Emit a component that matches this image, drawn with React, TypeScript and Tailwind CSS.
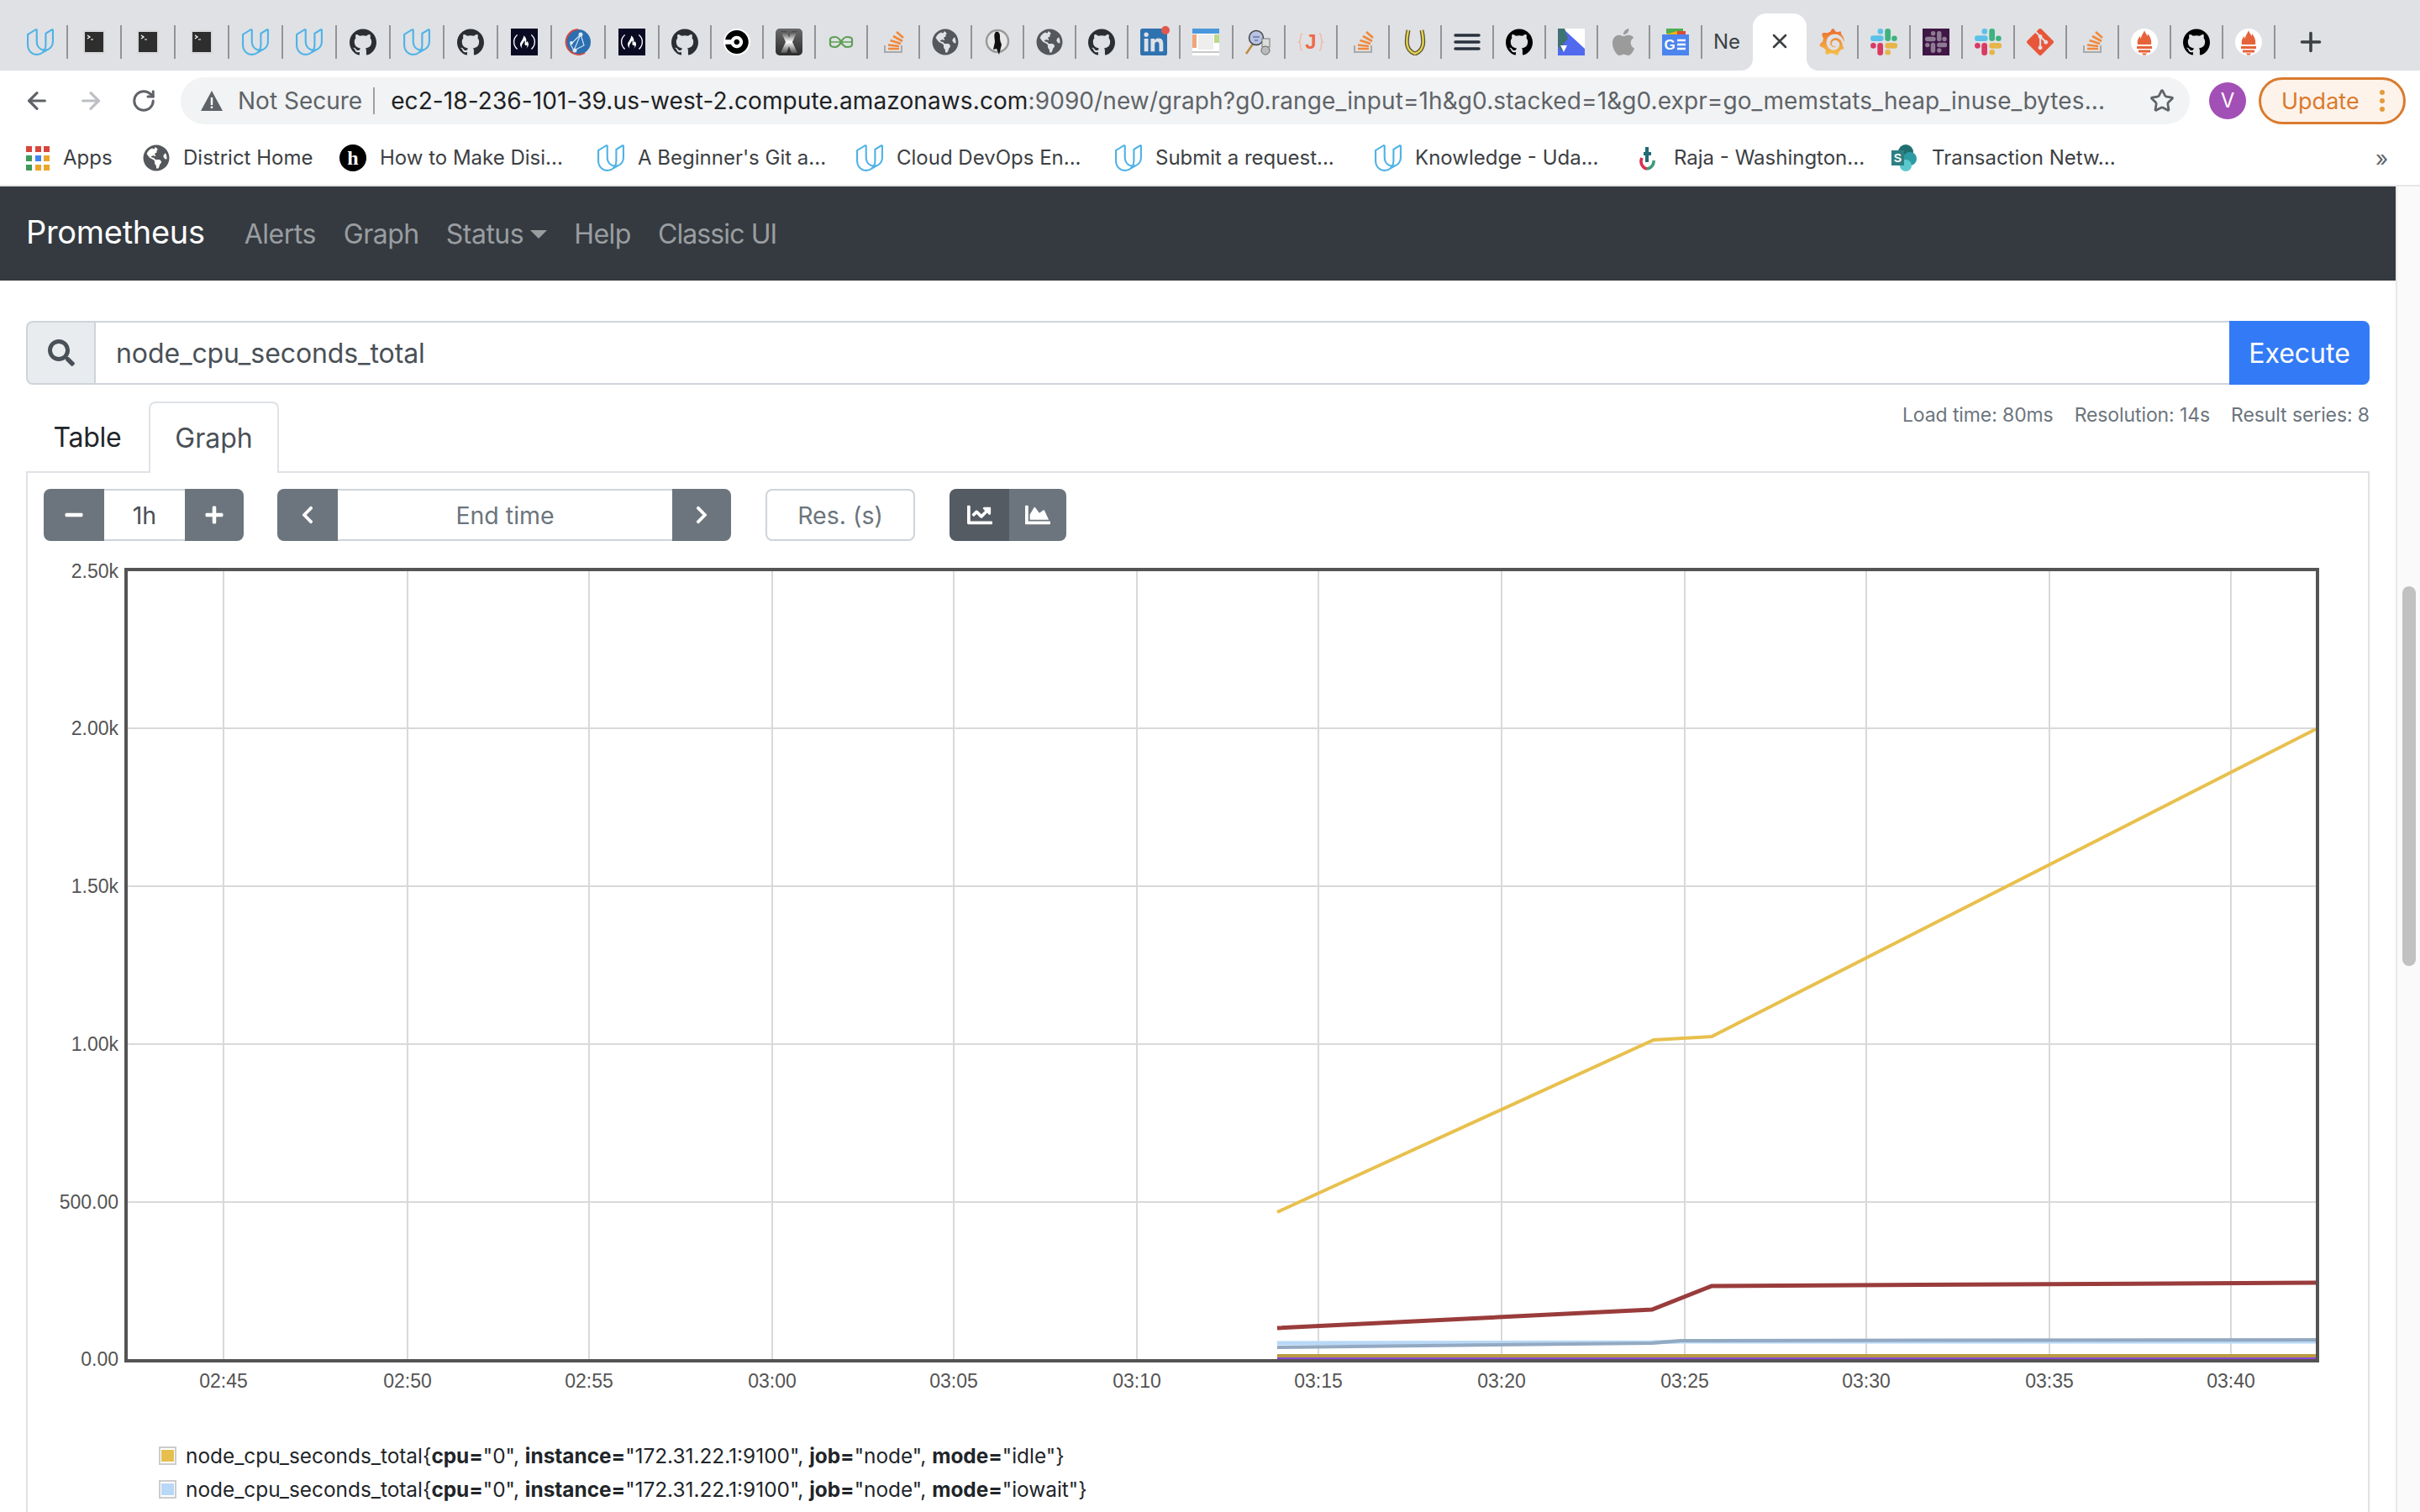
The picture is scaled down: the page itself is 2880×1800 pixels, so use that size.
import type { ReactNode } from "react";
import { ArrowLeft, ArrowRight, Plus, RotateCw, Star, X } from "lucide-react";
import { FaChartArea, FaChartLine, FaChevronLeft, FaChevronRight, FaGlobeAmericas, FaMinus, FaPlus, FaSearch } from "react-icons/fa";
import { SiApple, SiCircleci, SiFreecodecamp, SiGit, SiGithub, SiGrafana, SiLinkedin, SiUdacity } from "react-icons/si";

const Box = ({ children }: { children: ReactNode }) => (
  <svg viewBox="0 0 32 32" className="h-[32px] w-[32px] shrink-0">
    {children}
  </svg>
);

const Udacity = () => <SiUdacity className="h-[32px] w-[32px] shrink-0 text-[#4fb3e6]" />;
const Github = ({ dark }: { dark?: boolean }) => (
  <SiGithub className={`h-[32px] w-[32px] shrink-0 ${dark ? "text-black" : "text-[#2b2f33]"}`} />
);
const Globe = () => <FaGlobeAmericas className="h-[32px] w-[32px] shrink-0 text-[#54575b]" />;

const Terminal = () => (
  <Box>
    <rect x="3" y="2" width="26" height="28" fill="#d8d8d8" />
    <rect x="5" y="4" width="22" height="24" fill="#2e2e2e" />
    <path d="M8 8l3 2-3 2M12 13h3" stroke="#fff" strokeWidth="1.2" fill="none" />
  </Box>
);

const FreeCodeCamp = () => (
  <span className="flex h-[32px] w-[32px] shrink-0 items-center justify-center bg-[#0a0a23]">
    <SiFreecodecamp className="h-[26px] w-[26px] text-white" />
  </span>
);

const StackOverflow = () => (
  <Box>
    <path d="M6 20v8h20v-8" stroke="#a9a9a9" strokeWidth="2" fill="none" />
    <path d="M10 24h13M10 19.500l13 1.500M12.500 14l12.500 4M16 9l11 6M20 4l8 7" stroke="#f0883a" strokeWidth="2.600" fill="none" />
  </Box>
);

const Prometheus = () => (
  <Box>
    <circle cx="16" cy="16" r="16" fill="#fff" />
    <path d="M16 2c1 4 3 4 3 7 1-1 1-2 1-3 3 4 5 8 4 13H8c-1-5 1-8 3-10 0 1 0 2 1 3 0-4 3-6 4-10z" fill="#e6633a" />
    <path d="M7 21h18v3H7zM9 25.500h14v3H9zM13 29.500h6l-1.500 2h-3z" fill="#e6633a" />
  </Box>
);

const SlackShapes = ({ blue, green, red, yellow }: { blue: string; green: string; red: string; yellow: string }) => (
  <>
    <rect x="0" y="8.300" width="15.600" height="6.700" rx="3.300" fill={blue} />
    <circle cx="11.800" cy="3.400" r="3.300" fill={blue} />
    <rect x="17.300" y="0" width="6.700" height="15" rx="3.300" fill={green} />
    <circle cx="28.400" cy="11.700" r="3.300" fill={green} />
    <circle cx="3.400" cy="20.400" r="3.300" fill={red} />
    <rect x="8.300" y="17" width="6.700" height="15" rx="3.300" fill={red} />
    <rect x="17.300" y="17" width="15" height="6.700" rx="3.300" fill={yellow} />
    <circle cx="20.700" cy="28.300" r="3.300" fill={yellow} />
  </>
);

const Slack = () => (
  <Box>
    <SlackShapes blue="#5cc1e8" green="#3fb27f" red="#d93a62" yellow="#e6b64a" />
  </Box>
);

const tabsBefore: ReactNode[] = [
  <Udacity />,
  <Terminal />,
  <Terminal />,
  <Terminal />,
  <Udacity />,
  <Udacity />,
  <Github />,
  <Udacity />,
  <Github />,
  <FreeCodeCamp />,
  <Box>
    <circle cx="16" cy="16" r="15" fill="#2b6fb0" />
    <path d="M4 24A15 15 0 0 1 16 1M2 19a15 15 0 0 0 22 10" stroke="#cf4a42" strokeWidth="2" fill="none" />
    <path d="M7 19L19 7l4 13-12 6zM19 7l-8 19" stroke="#cfe2f3" strokeWidth="1.200" fill="none" />
    <circle cx="19" cy="7" r="2.500" fill="#dbe8f5" />
    <circle cx="12" cy="26" r="2.500" fill="#dbe8f5" />
    <circle cx="8" cy="17" r="2" fill="#dbe8f5" />
  </Box>,
  <FreeCodeCamp />,
];

const tabsMiddle: ReactNode[] = [
  <Github />,
  <span className="h-[32px] w-[32px] shrink-0 rounded-full bg-white">
    <SiCircleci className="m-[2px] h-[28px] w-[28px] text-black" />
  </span>,
  <Box>
    <defs>
      <linearGradient id="xbg" x1="0" y1="0" x2="0" y2="1">
        <stop offset="0" stopColor="#6a6a6a" />
        <stop offset="1" stopColor="#2c2c2c" />
      </linearGradient>
      <linearGradient id="xfg" x1="0" y1="0" x2="0" y2="1">
        <stop offset="0" stopColor="#444" />
        <stop offset="0.500" stopColor="#fff" />
        <stop offset="1" stopColor="#555" />
      </linearGradient>
    </defs>
    <rect x="0" y="0" width="32" height="32" rx="5" fill="url(#xbg)" />
    <path d="M6 3h7l3 8 3-8h7l-6 13 6 13h-7l-3-8-3 8H6l6-13z" fill="url(#xfg)" />
  </Box>,
  <Box>
    <path d="M3 13Q3 10 9 10q4 0 7 6t7 6q6 0 6-3v-6q0-3-6-3-4 0-7 6t-7 6q-6 0-6-3z" fill="none" stroke="#5e9f52" strokeWidth="2.200" />
    <path d="M3 16h26" stroke="#5e9f52" strokeWidth="1.500" />
  </Box>,
  <StackOverflow />,
  <Globe />,
  <Box>
    <circle cx="16" cy="15" r="13" fill="#e8e8e8" stroke="#9a9a9a" strokeWidth="2.500" />
    <path d="M14 4c3-1 5 1 5 5 0 3 0 6 2 10l-3 12-3-7-4 1 2-9c0-4-2-9 1-12z" fill="#111" />
  </Box>,
  <Globe />,
  <Github />,
  <span className="relative h-[32px] w-[32px] shrink-0">
    <SiLinkedin className="h-[32px] w-[32px] text-[#2f72b0]" />
    <span className="absolute -right-[3px] -top-[3px] h-[10px] w-[10px] rounded-full bg-[#e2574c]" />
  </span>,
  <Box>
    <rect width="32" height="32" fill="#fff" />
    <rect width="32" height="6" fill="#4a98db" />
    <rect x="7" y="7" width="18" height="18" fill="#eeeeee" />
    <rect y="7" width="5" height="16" fill="#efa678" />
    <rect x="26" y="7" width="6" height="10" fill="#bcd88c" />
    <rect y="27" width="32" height="2" fill="#c8c8c8" />
  </Box>,
  <Box>
    <path d="M1 30l9-13" stroke="#b98b3c" strokeWidth="2.500" />
    <circle cx="13" cy="11" r="8.500" fill="#b7c4e2" stroke="#444" strokeWidth="1.500" />
    <path d="M9 10h8M11 14h4" stroke="#6a74a8" strokeWidth="1.500" />
    <rect x="20" y="12" width="9" height="10" fill="#ddd" stroke="#777" />
    <circle cx="24" cy="26" r="5" fill="#bbb" stroke="#666" />
  </Box>,
  <Box>
    <text x="16" y="24" textAnchor="middle" fontSize="24" fontWeight="700" fill="#ee6a45" className="font-['Liberation_Sans',sans-serif]">
      J
    </text>
    <path d="M6 6C2 6 5 15 2 16c3 1 0 10 4 10M26 6c4 0 1 9 4 10-3 1 0 10-4 10" stroke="#f4b8a4" strokeWidth="1.500" fill="none" />
  </Box>,
  <StackOverflow />,
  <Box>
    <path d="M8 2c-3 14-3 24 8 28 11-4 11-14 8-28" fill="none" stroke="#55502a" strokeWidth="5" />
    <path d="M8 2c-3 14-3 24 8 28 11-4 11-14 8-28" fill="none" stroke="#e3cf54" strokeWidth="2.500" />
  </Box>,
  <Box>
    <path d="M2 8h28M2 16h28M2 24h28" stroke="#29313c" strokeWidth="3.500" strokeLinecap="round" />
  </Box>,
  <Github dark />,
  <Box>
    <rect width="32" height="32" fill="#5069ef" />
    <path d="M6 0h26v24z" fill="#fff" />
    <path d="M0 0h8l4 12-6 7-1 9-5-8z" fill="#3f7273" />
    <path d="M3 20h8l-4 8z" fill="#fff" />
  </Box>,
  <SiApple className="h-[32px] w-[32px] shrink-0 text-[#9b9b9b]" />,
  <Box>
    <path d="M5 0h20v6H5z" fill="#4caf50" />
    <path d="M4 7l14-4 10 4z" fill="#f4b400" />
    <path d="M18 3h10v4H18z" fill="#db4a3a" />
    <rect y="7" width="32" height="25" fill="#4c84ee" />
    <text x="9" y="25" textAnchor="middle" fontSize="17" fontWeight="700" fill="#fff" className="font-['Liberation_Sans',sans-serif]">
      G
    </text>
    <path d="M18 14h10M18 19h10M18 24h10" stroke="#fff" strokeWidth="2.500" />
  </Box>,
];

const tabsAfter: ReactNode[] = [
  <span className="h-[32px] w-[32px] shrink-0">
    <svg className="absolute h-0 w-0">
      <defs>
        <linearGradient id="grafana" x1="0" y1="0" x2="0" y2="1">
          <stop offset="0" stopColor="#ec6a2c" />
          <stop offset="1" stopColor="#f6c24a" />
        </linearGradient>
      </defs>
    </svg>
    <SiGrafana className="h-[32px] w-[32px]" fill="url(#grafana)" />
  </span>,
  <Slack />,
  <span className="h-[32px] w-[32px] shrink-0 bg-[#3f1645] p-[3px]">
    <svg viewBox="0 0 32 32" className="h-[26px] w-[26px]">
      <SlackShapes blue="#8f7a93" green="#8f7a93" red="#8f7a93" yellow="#8f7a93" />
    </svg>
  </span>,
  <Slack />,
  <SiGit className="h-[32px] w-[32px] shrink-0 text-[#e8563a]" />,
  <StackOverflow />,
  <Prometheus />,
  <Github dark />,
  <Prometheus />,
];

const bookmarks: { icon: ReactNode; label: string; w: string }[] = [
  {
    label: "Apps",
    w: "w-[139px]",
    icon: (
      <span className="grid h-[28px] w-[28px] shrink-0 grid-cols-3 gap-[4px]">
        {["#d9453a", "#d9453a", "#d9453a", "#3f9a5a", "#3f85ee", "#eba52b", "#3f9a5a", "#eba52b", "#eba52b"].map((c, i) => (
          <span key={i} className="h-[7px] w-[7px]" style={{ backgroundColor: c }} />
        ))}
      </span>
    ),
  },
  { label: "District Home", w: "w-[234px]", icon: <Globe /> },
  {
    label: "How to Make Disi...",
    w: "w-[307px]",
    icon: (
      <Box>
        <circle cx="16" cy="16" r="16" fill="#000" />
        <text x="16" y="24" textAnchor="middle" fontSize="24" fontWeight="700" fill="#fff" className="font-['Liberation_Serif',serif]">
          h
        </text>
      </Box>
    ),
  },
  { label: "A Beginner's Git a...", w: "w-[308px]", icon: <Udacity /> },
  { label: "Cloud DevOps En...", w: "w-[308px]", icon: <Udacity /> },
  { label: "Submit a request...", w: "w-[309px]", icon: <Udacity /> },
  { label: "Knowledge - Uda...", w: "w-[308px]", icon: <Udacity /> },
  {
    label: "Raja - Washington...",
    w: "w-[307px]",
    icon: (
      <Box>
        <path d="M10 16a9 9 0 0 0 6 13" stroke="#d9304f" strokeWidth="3.500" fill="none" />
        <path d="M16 29a9 9 0 0 0 8-10" stroke="#3f9a7a" strokeWidth="3.500" fill="none" />
        <path d="M16 3v18M12 11h9" stroke="#236a74" strokeWidth="4" fill="none" />
      </Box>
    ),
  },
  {
    label: "Transaction Netw...",
    w: "w-[260px]",
    icon: (
      <Box>
        <circle cx="17" cy="9" r="9" fill="#1f6f70" />
        <circle cx="22" cy="17" r="8" fill="#2c9ca2" />
        <circle cx="17" cy="25" r="7" fill="#5cc8cd" />
        <rect y="7" width="15" height="18" fill="#2d7f82" />
        <text x="7.500" y="21" textAnchor="middle" fontSize="14" fontWeight="700" fill="#fff" className="font-['Liberation_Sans',sans-serif]">
          S
        </text>
      </Box>
    ),
  },
];

const vGrid = [266, 485, 701, 919, 1135, 1353, 1569, 1787, 2005, 2221, 2439, 2655];
const xLabels = ["02:45", "02:50", "02:55", "03:00", "03:05", "03:10", "03:15", "03:20", "03:25", "03:30", "03:35", "03:40"];
const hGrid = [
  { y: 867, label: "2.00k" },
  { y: 1055, label: "1.50k" },
  { y: 1243, label: "1.00k" },
  { y: 1431, label: "500.00" },
];

function Chart() {
  return (
    <svg viewBox="52 660 2720 1010" className="mt-[16px] block h-[1010px] w-[2720px] font-['Liberation_Sans',sans-serif]">
      {vGrid.map((x) => (
        <line key={x} x1={x} x2={x} y1={678} y2={1620} stroke="#d9d9d9" strokeWidth="2" />
      ))}
      {hGrid.map((g) => (
        <line key={g.y} x1={150} x2={2758} y1={g.y} y2={g.y} stroke="#d9d9d9" strokeWidth="2" />
      ))}
      <polyline points="1520,1443 1968,1238 2037,1234 2756,868" fill="none" stroke="#e8c04d" strokeWidth="4" />
      <polyline points="1520,1581 1966,1559 2037,1531 2756,1527" fill="none" stroke="#9a3c3c" strokeWidth="5" />
      <polyline points="1520,1599 1966,1598 2000,1597 2756,1597" fill="none" stroke="#b8d8f6" strokeWidth="5" />
      <polyline points="1520,1604 1966,1599 2000,1596 2756,1595" fill="none" stroke="#93a9c1" strokeWidth="4" />
      <line x1="1520" x2="2756" y1="1614" y2="1614" stroke="#b99a40" strokeWidth="4" />
      <line x1="1520" x2="2756" y1="1618" y2="1618" stroke="#8a46d8" strokeWidth="4" />
      <rect x="150" y="678" width="2608" height="942" fill="none" stroke="#545454" strokeWidth="4" />
      <g fill="#545454" fontSize="23">
        <text x="141" y="688" textAnchor="end">2.50k</text>
        {hGrid.map((g) => (
          <text key={g.label} x="141" y={g.y + 8} textAnchor="end">
            {g.label}
          </text>
        ))}
        <text x="141" y="1626" textAnchor="end">0.00</text>
        {xLabels.map((t, i) => (
          <text key={t} x={vGrid[i]} y="1652" textAnchor="middle">
            {t}
          </text>
        ))}
      </g>
    </svg>
  );
}

function LegendRow({ mode, color }: { mode: string; color: string }) {
  return (
    <div className="flex h-[40px] items-center text-[24.400px] text-[#212529]">
      <span className="mr-[11px] flex h-[22px] w-[21px] items-center justify-center border-2 border-[#cccccc] bg-white">
        <span className="h-[14px] w-[15px]" style={{ backgroundColor: color }} />
      </span>
      <span>
        node_cpu_seconds_total{"{"}<b>cpu=</b>"0", <b>instance=</b>"172.31.22.1:9100", <b>job=</b>"node", <b>mode=</b>"{mode}"{"}"}
      </span>
    </div>
  );
}

export default function App() {
  return (
    <div className="flex h-[1800px] w-[2880px] flex-col overflow-hidden bg-white font-[Inter,sans-serif]">
      {/* tab strip */}
      <div className="flex h-[84px] shrink-0 items-end bg-[#dfe1e5] pl-[17px]">
        {tabsBefore.map((icon, i) => (
          <div key={i} className="mb-[14px] flex h-[40px] w-[64px] items-center justify-center border-r-2 border-[#929497]">
            {icon}
          </div>
        ))}
        {tabsMiddle.map((icon, i) => (
          <div key={i} className="mb-[14px] flex h-[40px] w-[62.050px] items-center justify-center border-r-2 border-[#929497]">
            {icon}
          </div>
        ))}
        <div className="mb-[14px] flex h-[40px] w-[60px] items-center overflow-hidden pl-[13px] text-[24px] text-[#3c4043]">Ne</div>
        <div className="relative flex h-[68px] w-[64px] items-center justify-center rounded-t-[16px] bg-white">
          <span className="absolute -left-[14px] bottom-0 h-[14px] w-[14px] bg-white">
            <span className="block h-[14px] w-[14px] rounded-br-[14px] bg-[#dfe1e5]" />
          </span>
          <span className="absolute -right-[14px] bottom-0 h-[14px] w-[14px] bg-white">
            <span className="block h-[14px] w-[14px] rounded-bl-[14px] bg-[#dfe1e5]" />
          </span>
          <X className="mb-[2px] h-[28px] w-[28px] text-[#3c4043]" strokeWidth={2.2} />
        </div>
        {tabsAfter.map((icon, i) => (
          <div key={i} className="mb-[14px] flex h-[40px] w-[62px] items-center justify-center border-r-2 border-[#929497]">
            {icon}
          </div>
        ))}
        <Plus className="mb-[16px] ml-[24px] h-[36px] w-[36px] text-[#3c4043]" strokeWidth={2.4} />
      </div>

      {/* toolbar */}
      <div className="flex h-[72px] shrink-0 items-center pl-[28px] text-[#5f6368]">
        <ArrowLeft className="h-[32px] w-[32px]" strokeWidth={2.4} />
        <ArrowRight className="ml-[32px] h-[32px] w-[32px] text-[#bcbfc3]" strokeWidth={2.4} />
        <RotateCw className="ml-[32px] h-[30px] w-[30px]" strokeWidth={2.4} />
        <div className="ml-[29px] flex h-[56px] w-[2391px] items-center rounded-full bg-[#f1f3f4] pl-[24px] text-[28px]">
          <svg viewBox="0 0 26 24" className="h-[24px] w-[26px] shrink-0">
            <path d="M13 0l13 24H0z" fill="#5f6368" />
            <path d="M11.800 8h2.400v9h-2.400zM11.800 18.500h2.400v2.500h-2.400z" fill="#fff" />
          </svg>
          <span className="ml-[18px] text-[#5f6368]">Not Secure</span>
          <span className="ml-[13px] h-[32px] w-[2px] bg-[#9aa0a6]" />
          <span className="ml-[19px] whitespace-nowrap tracking-[0.1px] text-[#5f6368]">
            <span className="text-[#202124]">ec2-18-236-101-39.us-west-2.compute.amazonaws.com</span>
            :9090/new/graph?g0.range_input=1h&amp;g0.stacked=1&amp;g0.expr=go_memstats_heap_inuse_bytes...
          </span>
          <Star className="ml-auto mr-[18px] h-[30px] w-[30px] shrink-0" strokeWidth={2.2} />
        </div>
        <div className="ml-[23px] flex h-[44px] w-[44px] items-center justify-center rounded-full bg-[#a24fb6] text-[24px] text-white">V</div>
        <div className="ml-[15px] flex h-[56px] w-[175px] items-center rounded-full border-[3px] border-[#d97b2e] bg-[#fdf3ea] pl-[24px] text-[27px] text-[#d97b2e]">
          <span className="pt-[2px]">Update</span>
          <span className="ml-[24px] flex flex-col gap-[4px]">
            <span className="h-[6px] w-[6px] rounded-full bg-[#e69a3c]" />
            <span className="h-[6px] w-[6px] rounded-full bg-[#e69a3c]" />
            <span className="h-[6px] w-[6px] rounded-full bg-[#e69a3c]" />
          </span>
        </div>
      </div>

      {/* bookmarks */}
      <div className="flex h-[66px] shrink-0 items-center border-b-2 border-[#e6e6e6] pl-[31px] text-[24px] text-[#3c4043]">
        {bookmarks.map((b) => (
          <div key={b.label} className={`flex items-center gap-[16px] ${b.w}`}>
            {b.icon}
            <span className="whitespace-nowrap">{b.label}</span>
          </div>
        ))}
        <span className="ml-[316px] text-[26px] text-[#5f6368]">»</span>
      </div>

      <div className="flex min-h-0 flex-1">
        <div className="min-w-0 flex-1">
          {/* prometheus navbar */}
          <nav className="flex h-[112px] items-center bg-[#343a40] pl-[31px] text-[32px] tracking-[-0.5px] text-[#9a9da0]">
            <span className="mb-[4px] mr-[47px] text-[38px] tracking-[-0.3px] text-white">Prometheus</span>
            <span className="pt-[2px]">Alerts</span>
            <span className="ml-[33px] pt-[2px]">Graph</span>
            <span className="ml-[32px] flex items-center pt-[2px]">
              Status
              <span className="ml-[8px] h-0 w-0 border-x-[10px] border-t-[10px] border-x-transparent border-t-[#9a9da0]" />
            </span>
            <span className="ml-[32px] pt-[2px]">Help</span>
            <span className="ml-[32px] pt-[2px] tracking-[-0.9px]">Classic UI</span>
          </nav>

          <div className="pl-[31px] pr-[31px] pt-[48px]">
            {/* expression input */}
            <div className="flex h-[76px] text-[32px]">
              <div className="flex w-[83px] items-center justify-center rounded-l-[8px] border-2 border-[#ced4da] bg-[#e9ecef] text-[#495057]">
                <FaSearch className="h-[32px] w-[32px]" />
              </div>
              <div className="flex flex-1 items-center border-y-2 border-[#ced4da] pl-[24px] pt-[2px] tracking-[-0.1px] text-[#495057]">node_cpu_seconds_total</div>
              <div className="flex w-[167px] items-center justify-center rounded-r-[8px] bg-[#337bf6] pt-[2px] text-white">Execute</div>
            </div>

            {/* tabs and query stats */}
            <div className="mt-[20px] flex h-[85px] items-start justify-between">
              <div className="flex text-[32px]">
                <div className="flex h-[85px] w-[146px] items-center justify-center tracking-[-0.3px] text-[#212529]">Table</div>
                <div className="relative z-10 flex h-[85px] w-[155px] items-center justify-center rounded-t-[8px] border-x-2 border-t-2 border-[#dee2e6] bg-white text-[#495057]">
                  Graph
                </div>
              </div>
              <div className="mt-[2px] flex gap-[25px] text-[23px] leading-[28px] tracking-[-0.1px] text-[#6c757d]">
                <span>Load time: 80ms</span>
                <span>Resolution: 14s</span>
                <span>Result series: 8</span>
              </div>
            </div>

            {/* graph panel */}
            <div className="-mt-[2px] h-[1300px] border-x-2 border-t-2 border-[#dee2e6] px-[19px] pt-[19px]">
              <div className="flex h-[62px] items-stretch text-[28.500px] text-[#6c757d]">
                <div className="flex">
                  <div className="flex w-[72px] items-center justify-center rounded-l-[8px] bg-[#6c757d] text-white">
                    <FaMinus className="h-[24px] w-[24px]" />
                  </div>
                  <div className="flex w-[96px] items-center justify-center border-y-2 border-[#ced4da] pt-[2px] text-[#495057]">1h</div>
                  <div className="flex w-[70px] items-center justify-center rounded-r-[8px] bg-[#6c757d] text-white">
                    <FaPlus className="h-[24px] w-[24px]" />
                  </div>
                </div>
                <div className="ml-[40px] flex">
                  <div className="flex w-[72px] items-center justify-center rounded-l-[8px] bg-[#6c757d] text-white">
                    <FaChevronLeft className="h-[24px] w-[24px]" />
                  </div>
                  <div className="flex w-[398px] items-center justify-center border-y-2 border-[#ced4da] pt-[2px]">End time</div>
                  <div className="flex w-[70px] items-center justify-center rounded-r-[8px] bg-[#6c757d] text-white">
                    <FaChevronRight className="h-[24px] w-[24px]" />
                  </div>
                </div>
                <div className="ml-[41px] flex w-[178px] items-center justify-center rounded-[8px] border-2 border-[#ced4da] pt-[2px]">Res. (s)</div>
                <div className="ml-[41px] flex text-white">
                  <div className="flex w-[71px] items-center justify-center rounded-l-[8px] bg-[#545b62]">
                    <FaChartLine className="h-[30px] w-[30px]" />
                  </div>
                  <div className="flex w-[68px] items-center justify-center rounded-r-[8px] bg-[#6c757d]">
                    <FaChartArea className="h-[30px] w-[30px]" />
                  </div>
                </div>
              </div>

              <Chart />

              <div className="mt-[43px] pl-[137px]">
                <LegendRow mode="idle" color="#e6bf4e" />
                <LegendRow mode="iowait" color="#b8d8f6" />
              </div>
            </div>
          </div>
        </div>

        {/* page scrollbar */}
        <div className="w-[29px] shrink-0 border-l-2 border-[#e8e8e8] bg-[#fafafa] pl-[6px] pt-[476px]">
          <div className="h-[452px] w-[16px] rounded-full bg-[#c1c1c1]" />
        </div>
      </div>
    </div>
  );
}
